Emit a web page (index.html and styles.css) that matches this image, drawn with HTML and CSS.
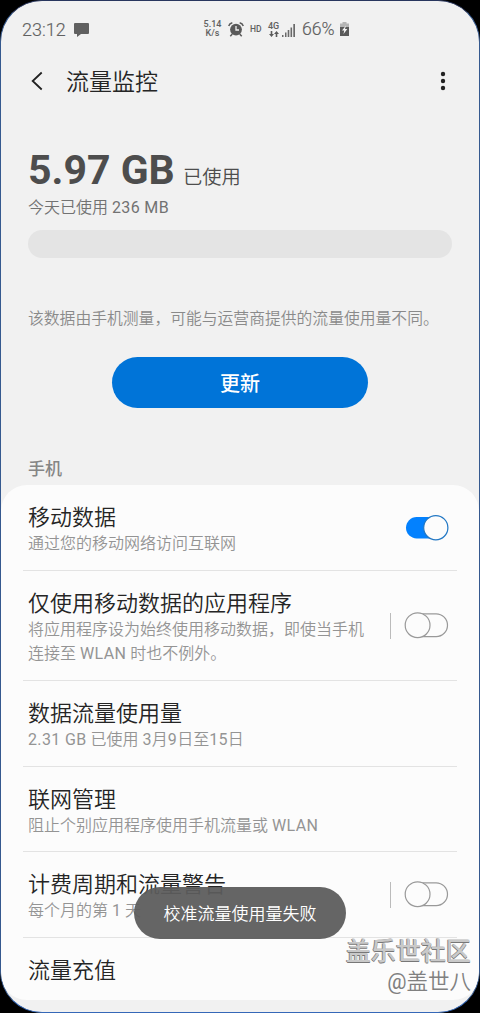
FILE: index.html
```html
<!DOCTYPE html>
<html lang="zh-CN">
<head>
<meta charset="utf-8">
<title>流量监控</title>
<link rel="stylesheet" href="styles.css">
</head>
<body>
<div class="phone">
  <header class="status">
    <span class="clock">23:12</span>
    <svg class="chat" width="15" height="14" viewBox="0 0 15 14"><path d="M1 0h13Q15 0 15 1v9Q15 11 14 11H7L3 14V11H1Q0 11 0 10v-9Q0 0 1 0Z" fill="#606060"/></svg>
    <span class="speed"><span>5.14</span><span>K/s</span></span>
    <svg class="alarm" width="16" height="15" viewBox="0 0 16 15"><circle cx="8" cy="7.600" r="5.900" fill="#5a5a5a"/><path d="M.7 4Q1.500 1.500 4.300.8M15.300 4Q14.500 1.500 11.700.8M4.300 12L2.300 14.200M11.700 12l2 2.200" fill="none" stroke="#5a5a5a" stroke-width="1.500"/><path d="M8 4v4h3" fill="none" stroke="#f1f1f1" stroke-width="1.300"/></svg>
    <span class="hd">HD</span>
    <span class="net"><span>4G</span><svg width="10" height="6" viewBox="0 0 10 6"><path d="M1.700 0h1.600v3H5L2.500 6 0 3h1.700ZM6.700 6h1.600V3H10L7.500 0 5 3h1.700Z" fill="#5a5a5a"/></svg></span>
    <svg class="signal" width="13" height="13" viewBox="0 0 13 13"><path d="M0 11h1.500v2H0ZM3 8.500h1.500V13H3ZM5.700 6h1.600v7H5.700ZM8.500 3.500h1.600V13H8.500ZM11.300 0H13v13h-1.700Z" fill="#6a6a6a"/></svg>
    <span class="percent">66%</span>
    <svg class="battery" width="9" height="14" viewBox="0 0 9 14"><path d="M2.500 0h4v1.500H9V6H0V1.500h2.500Z" fill="#b5b5b5"/><path d="M0 5h9v9H0Z" fill="#5a5a5a"/><path d="M6 3.500L2 8.500h2.200L3.500 12 7.300 7H5Z" fill="#f5f5f5"/></svg>
  </header>
  <nav class="bar">
    <svg class="back" width="12" height="20" viewBox="0 0 12 20"><path d="M10.700 1.500L1.700 10l9 8.500" fill="none" stroke="#222" stroke-width="1.800"/></svg>
    <h1>流量监控</h1>
    <svg class="more" width="6" height="20" viewBox="0 0 6 20"><g fill="#222"><circle cx="3" cy="3" r="2.200"/><circle cx="3" cy="10" r="2.200"/><circle cx="3" cy="17" r="2.200"/></g></svg>
  </nav>
  <section class="usage">
    <div class="total"><strong>5.97 GB</strong><span>已使用</span></div>
    <div class="today">今天已使用 <span class="latin">236 MB</span></div>
    <div class="meter"></div>
    <p class="note">该数据由手机测量，可能与运营商提供的流量使用量不同。</p>
    <button class="update">更新</button>
  </section>
  <h2>手机</h2>
  <main class="card">
    <div class="row"><div class="text"><h3>移动数据</h3><p>通过您的移动网络访问互联网</p></div>
      <svg class="switch" width="46" height="28" viewBox="0 0 46 28"><rect x="2" y="3" width="42" height="21.500" rx="10.700" fill="#0381fe"/><circle cx="31.800" cy="13.700" r="12.100" fill="#fcfcfc" stroke="#2378c4" stroke-width="1.200"/></svg></div>
    <div class="row tall"><div class="text"><h3>仅使用移动数据的应用程序</h3><p>将应用程序设为始终使用移动数据，即使当手机<br>连接至 <span class="latin">WLAN</span> 时也不例外。</p></div>
      <i class="split"></i><svg class="switch" width="46" height="28" viewBox="0 0 46 28"><g fill="#fcfcfc" stroke="#999" stroke-width="1.200"><rect x="2" y="1.800" width="41.500" height="22.800" rx="11.400"/><circle cx="13.600" cy="13.200" r="12.400"/></g></svg></div>
    <div class="row"><div class="text"><h3>数据流量使用量</h3><p><span class="latin">2.31 GB</span> 已使用 <span class="latin">3</span>月<span class="latin">9</span>日至<span class="latin">15</span>日</p></div></div>
    <div class="row short"><div class="text"><h3>联网管理</h3><p>阻止个别应用程序使用手机流量或 <span class="latin">WLAN</span></p></div></div>
    <div class="row"><div class="text"><h3>计费周期和流量警告</h3><p>每个月的第 1 天</p></div>
      <i class="split"></i><svg class="switch" width="46" height="28" viewBox="0 0 46 28"><g fill="#fcfcfc" stroke="#999" stroke-width="1.200"><rect x="2" y="1.800" width="41.500" height="22.800" rx="11.400"/><circle cx="13.600" cy="13.200" r="12.400"/></g></svg></div>
    <div class="row last"><div class="text"><h3>流量充值</h3></div></div>
  </main>
  <div class="toast">校准流量使用量失败</div>
  <div class="watermark"><b>盖乐世社区</b><span>@盖世八</span></div>
</div>
</body>
</html>
```

FILE: styles.css
```css
* { box-sizing: border-box; margin: 0; padding: 0; }
body { background: #000; font-family: Roboto, "Noto Sans CJK SC DemiLight", "Noto Sans CJK SC", sans-serif; }
.phone {
  position: relative;
  width: 480px;
  height: 1013px;
  overflow: hidden;
  background: #f1f1f1;
  border: 1px solid #35598f;
  border-top-color: #28365e;
  border-bottom-color: #3568b8;
  border-radius: 42px;
}
h1, h2, h3 { font-weight: 400; }
svg { display: block; flex: none; }
.latin { letter-spacing: .35px; }

.status { display: flex; align-items: center; height: 56px; padding-left: 21px; color: #606060; white-space: nowrap; }
.clock { width: 45px; font-size: 18px; font-weight: 300; -webkit-text-stroke: .15px #606060; }
.chat { margin: 1px 0 0 7px; }
.speed { width: 19px; margin-left: 114px; font-size: 9px; line-height: 9px; font-weight: 500; text-align: center; display: flex; flex-direction: column; }
.alarm { margin-left: 6px; }
.hd { width: 12px; margin-left: 6px; font-size: 8.5px; font-weight: 500; }
.net { width: 12px; margin-left: 6px; font-size: 9px; line-height: 9px; font-weight: 500; }
.net svg { margin: 0 0 0 1px; }
.signal { margin: 2px 0 0 2px; }
.percent { width: 33px; margin-left: 7px; font-size: 17.7px; font-weight: 300; -webkit-text-stroke: .15px #606060; }
.battery { margin-left: 5px; }

.bar { display: flex; align-items: center; height: 48px; padding: 0 33px 0 30px; }
.bar h1 { flex: 1; margin-left: 23px; padding-top: 4px; font-size: 23px; line-height: 32px; color: #252525; }

.usage { padding: 0 27px; }
.total { display: flex; align-items: baseline; height: 56px; margin-top: 37px; line-height: 56px; color: #4d4d4d; }
.total strong { width: 155px; font-size: 41px; font-weight: 700; white-space: nowrap; }
.total span { font-size: 19.3px; }
.today { margin-top: -3px; height: 36px; font-size: 16px; line-height: 24px; color: #727272; padding-top: 1px; }
.meter { height: 28px; border-radius: 14px; background: #e4e4e4; margin-top: -1px; }
.note { margin-top: 49px; font-size: 15.8px; line-height: 24px; color: #8a8a8a; white-space: nowrap; }
.update { display: block; width: 256px; height: 51px; margin: 26px auto 0; border: 0; border-radius: 26px; background: #0074d8; color: #fff; font: 500 20px "Noto Sans CJK SC", sans-serif; }
h2 { margin: 48px 0 0 27px; height: 29px; font-family: "Noto Sans CJK SC", sans-serif; font-size: 17px; line-height: 24px; font-weight: 500; color: #858585; }

.card { height: 515px; border-radius: 26px; background: #fcfcfc; padding: 0 22px; }
.row { display: flex; align-items: center; height: 86px; padding: 0 7px 0 5px; border-bottom: 1px solid #e3e3e3; }
.row.tall { height: 110px; }
.row.short { height: 85px; }
.row.last { height: 62px; border: 0; }
.text { flex: 1; padding-top: 5px; white-space: nowrap; }
.text h3 { font-size: 22px; line-height: 28px; color: #252525; }
.text p { font-size: 16px; line-height: 24px; color: #949494; }
.last .text { padding-top: 3px; }
.split { width: 1px; height: 26px; margin-right: 13px; background: #bbb; }

.toast {
  position: absolute;
  left: 133px;
  top: 886px;
  width: 212px;
  height: 52px;
  border-radius: 26px;
  background: rgba(91, 91, 91, .94);
  color: #fff;
  font-size: 17px;
  line-height: 54px;
  text-align: center;
}
.watermark { position: absolute; right: 8px; top: 930px; display: flex; flex-direction: column; align-items: flex-end; color: #808080; white-space: nowrap; }
.watermark b { font-family: "Noto Sans CJK SC", sans-serif; font-size: 25px; line-height: 36px; font-weight: 500; color: #c9c9c9; text-shadow: 0 1px 0 #777, -1px 0 0 #8a8a8a; }
.watermark span { font-size: 21.5px; line-height: 30px; }
```
